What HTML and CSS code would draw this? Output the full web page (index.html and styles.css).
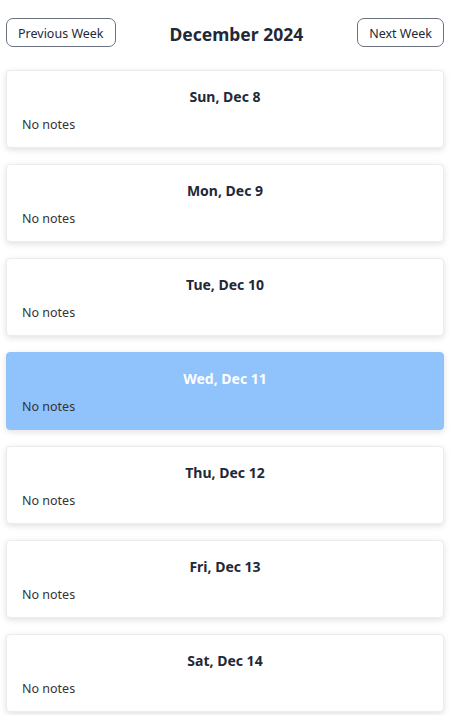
FILE: index.html
```html
<!DOCTYPE html>
<html lang="en">
<head>
<meta charset="utf-8">
<title>Week</title>
<link rel="stylesheet" href="styles.css">
</head>
<body>
<div class="page">
  <header class="header">
    <button class="nav-btn">Previous Week</button>
    <h1 class="month">December 2024</h1>
    <button class="nav-btn">Next Week</button>
  </header>
  <main class="days">
    <section class="day"><h2 class="day-title">Sun, Dec 8</h2><p class="notes">No notes</p></section>
    <section class="day"><h2 class="day-title">Mon, Dec 9</h2><p class="notes">No notes</p></section>
    <section class="day"><h2 class="day-title">Tue, Dec 10</h2><p class="notes">No notes</p></section>
    <section class="day today"><h2 class="day-title">Wed, Dec 11</h2><p class="notes">No notes</p></section>
    <section class="day"><h2 class="day-title">Thu, Dec 12</h2><p class="notes">No notes</p></section>
    <section class="day"><h2 class="day-title">Fri, Dec 13</h2><p class="notes">No notes</p></section>
    <section class="day"><h2 class="day-title">Sat, Dec 14</h2><p class="notes">No notes</p></section>
  </main>
</div>
</body>
</html>
```
FILE: styles.css
```css
* { box-sizing: border-box; }
html, body { margin: 0; padding: 0; background: #ffffff; }
body {
  font-family: "Noto Sans", "Open Sans", sans-serif;
  color: #1f2937;
}
.page {
  padding: 18px 15px 24px 6px;
}
.header {
  display: flex;
  justify-content: space-between;
  align-items: center;
  height: 29px;
  margin-bottom: 23px;
}
.nav-btn {
  font-family: inherit;
  font-size: 12.5px;
  line-height: 17px;
  color: #1f2937;
  background: #ffffff;
  border: 1px solid #6b7280;
  border-radius: 7px;
  padding: 6px 11px 4px;
  height: 29px;
}
.month {
  margin: 0;
  padding-top: 2px;
  font-size: 17.5px;
  line-height: 24px;
  font-weight: 700;
  color: #1f2937;
}
.days {
  display: flex;
  flex-direction: column;
  gap: 16px;
}
.day {
  background: #ffffff;
  border: 1px solid #ececec;
  border-radius: 4px;
  box-shadow: 0 2px 6px rgba(0, 0, 0, 0.12);
  padding: 16px 15px 14px;
  height: 78px;
}
.day-title {
  margin: 0 0 9px;
  text-align: center;
  font-size: 14px;
  line-height: 20px;
  font-weight: 700;
  color: #1f2937;
}
.notes {
  margin: 0;
  font-size: 12.5px;
  line-height: 17px;
  color: #333333;
}
.today {
  background: #90c2fc;
  border-color: #90c2fc;
}
.today .day-title { color: #ffffff; }
```
